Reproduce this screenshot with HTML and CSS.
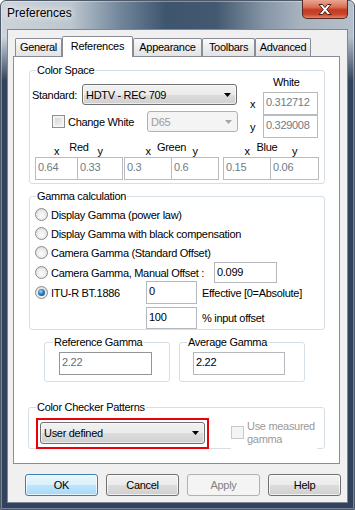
FILE: index.html
```html
<!DOCTYPE html>
<html lang="en">
<head>
    <meta charset="UTF-8">
    <meta name="viewport" content="width=device-width, initial-scale=1.0">
    <title>Preferences</title>
    <link rel="stylesheet" href="styles.css">
</head>
<body>

<div class="window">
    <div class="titlebar">
        <span class="title">Preferences</span>
        <div class="close">
            <svg width="14" height="11" viewBox="0 0 14 11"><polygon points="1,0.5 4.5,0.5 7,3.5 9.5,0.5 13,0.5 8.8,5.5 13,10.5 9.5,10.5 7,7.5 4.5,10.5 1,10.5 5.2,5.5" fill="#fff" stroke="#4a1f17" stroke-width="1"/></svg>
        </div>
    </div>

    <div class="client">
        <div class="tabs">
            <div class="tab w-general">General</div>
            <div class="tab tab-active w-refs">References</div>
            <div class="tab w-appear">Appearance</div>
            <div class="tab w-toolbars">Toolbars</div>
            <div class="tab w-advanced">Advanced</div>
        </div>

        <div class="page">
            <!-- Color space -->
            <div class="group cs">
                <div class="group-title">Color Space</div>
                <div class="cs-top">
                    <div class="cs-left">
                        <div class="row-std">
                            <span class="std-label">Standard:</span>
                            <div class="combo w-std">HDTV - REC 709
                                <svg width="7" height="4" viewBox="0 0 7 4"><polygon points="0,0 7,0 3.5,4" fill="#000"/></svg>
                            </div>
                        </div>
                        <div class="row-cw">
                            <span class="check"></span>
                            <span class="cw-label">Change White</span>
                            <div class="combo combo-off w-d65">D65
                                <svg width="7" height="4" viewBox="0 0 7 4"><polygon points="0,0 7,0 3.5,4" fill="#a6a6a6"/></svg>
                            </div>
                        </div>
                    </div>
                    <div class="cs-white">
                        <div class="white-title">White</div>
                        <div class="xy-row"><span class="xy-label">x</span><div class="tb tb-grey w55">0.312712</div></div>
                        <div class="xy-row"><span class="xy-label">y</span><div class="tb tb-grey w55">0.329008</div></div>
                    </div>
                </div>
                <div class="cs-rgb">
                    <div class="pair">
                        <div class="pair-name">Red</div>
                        <div class="pair-xy"><span class="w43">x</span><span class="w46">y</span></div>
                        <div class="pair-boxes"><div class="tb tb-grey w43">0.64</div><div class="tb tb-grey w46">0.33</div></div>
                    </div>
                    <div class="pair pair-green">
                        <div class="pair-name">Green</div>
                        <div class="pair-xy"><span class="w48">x</span><span class="w48">y</span></div>
                        <div class="pair-boxes"><div class="tb tb-grey w48">0.3</div><div class="tb tb-grey w48">0.6</div></div>
                    </div>
                    <div class="pair pair-blue">
                        <div class="pair-name">Blue</div>
                        <div class="pair-xy"><span class="w48">x</span><span class="w49">y</span></div>
                        <div class="pair-boxes"><div class="tb tb-grey w48">0.15</div><div class="tb tb-grey w49">0.06</div></div>
                    </div>
                </div>
            </div>

            <!-- Gamma -->
            <div class="group gamma">
                <div class="group-title">Gamma calculation</div>
                <div class="gamma-rows">
                    <div class="opt"><span class="radio"></span><span class="opt-label">Display Gamma (power law)</span></div>
                    <div class="opt"><span class="radio"></span><span class="opt-label">Display Gamma with black compensation</span></div>
                    <div class="opt"><span class="radio"></span><span class="opt-label">Camera Gamma (Standard Offset)</span></div>
                    <div class="opt opt-manual"><span class="radio"></span><span class="opt-label">Camera Gamma, Manual Offset :</span><div class="tb h21 w63">0.099</div></div>
                    <div class="opt opt-itu"><span class="radio radio-on"></span><span class="opt-label">ITU-R BT.1886</span><div class="tb w51">0</div><span class="itu-note">Effective [0=Absolute]</span></div>
                    <div class="opt-offset"><div class="tb h22 w51">100</div><span class="itu-note">% input offset</span></div>
                </div>
            </div>

            <div class="gamma-refs">
                <div class="group ref-group">
                    <div class="group-title title-ref">Reference Gamma</div>
                    <div class="tb tb-dark ref-box">2.22</div>
                </div>
                <div class="group ref-group">
                    <div class="group-title title-avg">Average Gamma</div>
                    <div class="tb avg-box">2.22</div>
                </div>
            </div>

            <!-- Color checker -->
            <div class="group checker">
                <div class="group-title title-checker">Color Checker Patterns</div>
                <div class="checker-row">
                    <div class="red-mark">
                        <div class="combo w-user">User defined
                            <svg width="7" height="4" viewBox="0 0 7 4"><polygon points="0,0 7,0 3.5,4" fill="#000"/></svg>
                        </div>
                    </div>
                    <div class="use-gamma">
                        <span class="check check-off"></span>
                        <span class="use-text">Use measured<br>gamma</span>
                    </div>
                </div>
            </div>
        </div>

        <div class="buttons">
            <button class="btn btn-default">OK</button>
            <button class="btn">Cancel</button>
            <button class="btn btn-off">Apply</button>
            <button class="btn">Help</button>
        </div>
    </div>
</div>

</body>
</html>
```

FILE: styles.css
```css
body {
    margin: 0;
    font-family: "Liberation Sans", Arial, sans-serif;
    font-size: 11px;
    letter-spacing: -0.3px;
    color: #000;
}

/* window frame */
.window {
    width: 355px;
    height: 510px;
    box-sizing: border-box;
    border: 1px solid #4d5968;
    border-radius: 6px 6px 0 0;
    box-shadow: inset 0 0 0 1px rgba(255, 255, 255, 0.35);
    background:
        linear-gradient(to bottom, rgba(49, 67, 92, 0) 36px, #31435c 80px),
        linear-gradient(90deg, #cdd4db 0, #bcc6cf 70px, #71859a 120px, #3e556e 165px, #435970 215px, #8797a8 265px, #a8b3be 300px, #b6c0ca 354px);
}

.titlebar {
    display: flex;
    height: 28px;
}

.title {
    padding-left: 6px;
    line-height: 25px;
    font-size: 12px;
    letter-spacing: 0;
    text-shadow: 0 0 6px #fff, 0 0 10px rgba(255, 255, 255, 0.8);
}

.close {
    display: flex;
    align-items: center;
    justify-content: center;
    width: 46px;
    height: 19px;
    margin: -1px 6px 0 auto;
    box-sizing: border-box;
    border: 1px solid #5a2a22;
    border-top: none;
    border-radius: 0 0 5px 5px;
    background: linear-gradient(#eaa692 0, #d96f56 40%, #c33a1f 55%, #c8472b 80%, #e0866a 100%);
}

.client {
    height: 474px;
    margin: 0 6px;
    box-sizing: border-box;
    border: 1px solid #7d8793;
    background: #f0f0f0;
}

/* tabs */
.tabs {
    display: flex;
    align-items: flex-end;
    height: 20px;
    margin: 6px 0 0 7px;
}

.tab {
    height: 18px;
    box-sizing: border-box;
    border: 1px solid #898c95;
    border-bottom: none;
    border-radius: 2px 2px 0 0;
    background: linear-gradient(#fbfbfb, #ededed 50%, #e3e3e3);
    text-align: center;
    line-height: 17px;
}

.tab-active {
    height: 21px;
    margin-bottom: -1px;
    background: #fff;
    line-height: 19px;
    z-index: 1;
}

.w-general { width: 47px; }
.w-refs { width: 71px; }
.w-appear { width: 69px; }
.w-toolbars { width: 53px; }
.w-advanced { width: 56px; }

.page {
    width: 327px;
    height: 408px;
    margin-left: 5px;
    box-sizing: border-box;
    border: 1px solid #898c95;
    background: #fff;
}

/* group boxes */
.group {
    box-sizing: border-box;
    border: 1px solid #d5dfe5;
    border-radius: 3px;
}

.group-title {
    width: max-content;
    height: 13px;
    line-height: 13px;
    margin: -7px 0 -6px 6px;
    padding: 0 1px;
    background: #fff;
}

/* controls */
.combo {
    display: flex;
    align-items: center;
    height: 21px;
    box-sizing: border-box;
    padding-left: 3px;
    border: 1px solid #707070;
    border-radius: 3px;
    background: linear-gradient(#f2f2f2 0, #ebebeb 50%, #dddddd 50%, #cfcfcf 100%);
    box-shadow: inset 0 0 0 1px rgba(255, 255, 255, 0.6);
}

.combo svg {
    margin-left: auto;
    margin-right: 5px;
}

.combo-off {
    border-color: #adb2b5;
    background: #f4f4f4;
    color: #9c9c9c;
    box-shadow: none;
}

.tb {
    height: 23px;
    box-sizing: border-box;
    padding: 0 2px;
    border: 1px solid #b5b8bd;
    background: #fff;
    line-height: 18px;
}

.tb-grey {
    color: #707a86;
    border-color: #b8bbc0;
}

.tb-dark {
    color: #6d6d6d;
    border-color: #929599;
}

.h21 { height: 21px; }
.h22 { height: 22px; }
.w43 { width: 43px; }
.w46 { width: 46px; }
.w48 { width: 48px; }
.w49 { width: 49px; }
.w51 { width: 51px; }
.w55 { width: 55px; }
.w63 { width: 63px; }

.check {
    width: 13px;
    height: 13px;
    flex: none;
    box-sizing: border-box;
    border: 1px solid #8e8f8f;
    background: linear-gradient(135deg, #cbcfd5, #f7f7f7);
    box-shadow: inset 0 0 0 2px #f4f4f4;
}

.check-off {
    border-color: #c6cacd;
    background: #f4f4f4;
    box-shadow: none;
}

.radio {
    display: flex;
    align-items: center;
    justify-content: center;
    width: 13px;
    height: 13px;
    flex: none;
    box-sizing: border-box;
    border: 1px solid #8b8b8b;
    border-radius: 50%;
    background: radial-gradient(circle at 50% 60%, #fdfdfd 0, #e9e9e9 55%, #cfcfcf 100%);
}

.radio-on::after {
    content: "";
    width: 7px;
    height: 7px;
    border-radius: 50%;
    background: radial-gradient(circle at 40% 35%, #9fd8f5 0, #2d7fb8 45%, #0e3d66 100%);
}

/* color space */
.cs {
    width: 296px;
    height: 114px;
    margin: 13px 0 0 15px;
}

.cs-top {
    display: flex;
}

.cs-left {
    width: 208px;
    padding-top: 13px;
}

.row-std {
    display: flex;
    align-items: center;
    height: 21px;
}

.std-label {
    width: 52px;
    box-sizing: border-box;
    padding-left: 2px;
}

.w-std { width: 155px; }

.row-cw {
    display: flex;
    align-items: center;
    height: 21px;
    margin-top: 6px;
    padding-left: 22px;
}

.cw-label {
    width: 79px;
    margin-left: 3px;
}

.w-d65 { width: 91px; }

.cs-white {
    margin-left: 10px;
    padding-top: 5px;
}

.white-title {
    height: 13px;
    line-height: 13px;
    padding-left: 25px;
    margin-bottom: 3px;
}

.xy-row {
    display: flex;
    align-items: center;
}

.xy-label {
    width: 15px;
    box-sizing: border-box;
    padding-left: 2px;
}

.cs-rgb {
    display: flex;
    margin: 3px 0 0 5px;
}

.pair-name {
    height: 13px;
    line-height: 13px;
    text-align: center;
}

.pair-xy {
    display: flex;
    height: 12px;
    line-height: 12px;
    margin-top: -9px;
}

.pair-xy span {
    text-align: center;
}

.pair-boxes {
    display: flex;
}

.pair-xy span + span,
.pair-boxes .tb + .tb {
    margin-left: -1px;
}

.pair-green { margin-left: 1px; }
.pair-blue { margin-left: 4px; }
.pair-blue .pair-name { padding-right: 8px; }

/* gamma */
.gamma {
    width: 296px;
    height: 134px;
    margin: 12px 0 0 15px;
}

.gamma-rows {
    padding-top: 8px;
}

.opt {
    display: flex;
    align-items: center;
    height: 19px;
    padding-left: 5px;
}

.opt-label {
    margin-left: 3px;
}

.opt-manual { height: 21px; }
.opt-manual .opt-label { width: 163px; }

.opt-itu {
    height: 23px;
    margin-top: -2px;
}

.opt-itu .opt-label { width: 95px; }

.itu-note {
    margin-left: 5px;
}

.opt-offset {
    display: flex;
    align-items: center;
    height: 22px;
    margin-top: 3px;
    padding-left: 116px;
}

.gamma-refs {
    display: flex;
    gap: 9px;
    margin: 12px 0 0 30px;
}

.ref-group {
    width: 126px;
    height: 40px;
}

.title-ref { margin-left: 8px; }
.title-avg { margin-left: 7px; }

.ref-box {
    width: 93px;
    margin: 9px 0 0 14px;
}

.avg-box {
    width: 92px;
    margin: 9px 0 0 13px;
}

/* color checker */
.checker {
    width: 297px;
    height: 42px;
    margin: 25px 0 0 14px;
}

.title-checker { margin-left: 7px; }

.checker-row {
    display: flex;
}

.red-mark {
    margin: 10px 0 0 7px;
    padding: 2px;
    border: 2px solid #e8000b;
}

.w-user {
    width: 165px;
    height: 22px;
}

.use-gamma {
    display: flex;
    align-items: flex-start;
    width: 86px;
    height: 29px;
    margin: 12px 0 0 22px;
    background: #fff;
    color: #9a9a9a;
    white-space: nowrap;
}

.use-gamma .check {
    margin-top: 6px;
}

.use-text {
    margin-left: 3px;
    line-height: 13px;
}

/* buttons */
.buttons {
    display: flex;
    gap: 8px;
    margin: 10px 0 0 17px;
}

.btn {
    width: 73px;
    height: 22px;
    padding: 0;
    box-sizing: border-box;
    border: 1px solid #707070;
    border-radius: 3px;
    background: linear-gradient(#f2f2f2 0, #ebebeb 50%, #dddddd 50%, #cfcfcf 100%);
    box-shadow: inset 0 0 0 1px rgba(255, 255, 255, 0.7);
    font: inherit;
    letter-spacing: inherit;
    color: #000;
    line-height: 20px;
}

.btn-default {
    border-color: #3c7fb1;
    background: linear-gradient(#eaf6fd 0, #d9f0fc 50%, #bee6fd 50%, #a7d9f5 100%);
}

.btn-off {
    border-color: #adb2b5;
    background: #f4f4f4;
    color: #838383;
    box-shadow: none;
}
```
